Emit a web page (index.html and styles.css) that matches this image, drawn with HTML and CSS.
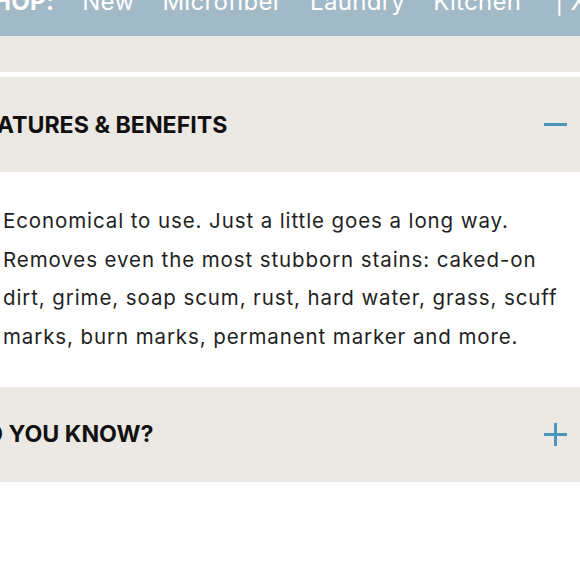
FILE: index.html
```html
<!DOCTYPE html>
<html lang="en">
<head>
<meta charset="utf-8">
<title>Product details</title>
<link rel="stylesheet" href="styles.css">
</head>
<body>
<nav class="shopbar">
  <ul class="shop-links">
    <li class="shop-label">SHOP:</li>
    <li>New</li>
    <li>Microfiber</li>
    <li>Laundry</li>
    <li>Kitchen</li>
    <li class="sep">|</li>
    <li>Xtra</li>
  </ul>
</nav>
<div class="band"></div>
<div class="divider"></div>
<section class="acc">
  <div class="acc-head">
    <h2 class="acc-title">FEATURES &amp; BENEFITS</h2>
    <span class="icon-minus" aria-hidden="true"></span>
  </div>
  <div class="acc-body">
    <ul class="benefits">
      <li>Economical to use. Just a little goes a long way.</li>
      <li>Removes even the most stubborn stains: caked-on<br>dirt, grime, soap scum, rust, hard water, grass, scuff<br>marks, burn marks, permanent marker and more.</li>
    </ul>
  </div>
</section>
<section class="acc">
  <div class="acc-head">
    <h2 class="acc-title acc-title-alt">DID YOU KNOW?</h2>
    <span class="icon-plus" aria-hidden="true"></span>
  </div>
</section>
</body>
</html>
```
FILE: styles.css
```css
html, body {
  margin: 0;
  padding: 0;
  background: #ffffff;
  overflow: hidden;
}
body {
  font-family: Inter, "Open Sans", "Liberation Sans", sans-serif;
  color: #1f1f1f;
}
.shopbar {
  background: #a2bac7;
  height: 36px;
  overflow: hidden;
}
.shop-links {
  list-style: none;
  margin: 0;
  padding: 0;
  display: flex;
  gap: 28px;
  margin-left: -23px;
  margin-top: -10px;
  font-size: 24px;
  line-height: 24px;
  letter-spacing: 0.3px;
  color: #ffffff;
  white-space: nowrap;
}
.shop-label {
  font-weight: 700;
}
.sep {
  margin-left: 6px;
  margin-right: -21px;
}
.band {
  background: #ece8e3;
  height: 36px;
}
.divider {
  height: 5px;
  background: #ffffff;
}
.acc-head {
  background: #ece8e3;
  height: 95px;
  display: flex;
  align-items: center;
  justify-content: space-between;
  padding-right: 13px;
}
.acc-title {
  margin: 0 0 0 -31px;
  font-size: 23.2px;
  font-weight: 700;
  color: #111111;
}
.acc-title-alt {
  margin-left: -37px;
}
.icon-minus {
  width: 23px;
  height: 3px;
  background: #4b97b9;
}
.icon-plus {
  width: 23px;
  height: 23px;
  position: relative;
}
.icon-plus::before,
.icon-plus::after {
  content: "";
  position: absolute;
  background: #4b97b9;
}
.icon-plus::before {
  left: 0;
  right: 0;
  top: 10px;
  height: 3px;
}
.icon-plus::after {
  top: 0;
  bottom: 0;
  left: 10px;
  width: 3px;
}
.acc-body {
  padding: 30px 0 30px 3px;
  background: #ffffff;
}
.benefits {
  list-style: none;
  margin: 0;
  padding: 0;
  font-size: 20.5px;
  line-height: 38.7px;
  letter-spacing: 0.9px;
}
```
